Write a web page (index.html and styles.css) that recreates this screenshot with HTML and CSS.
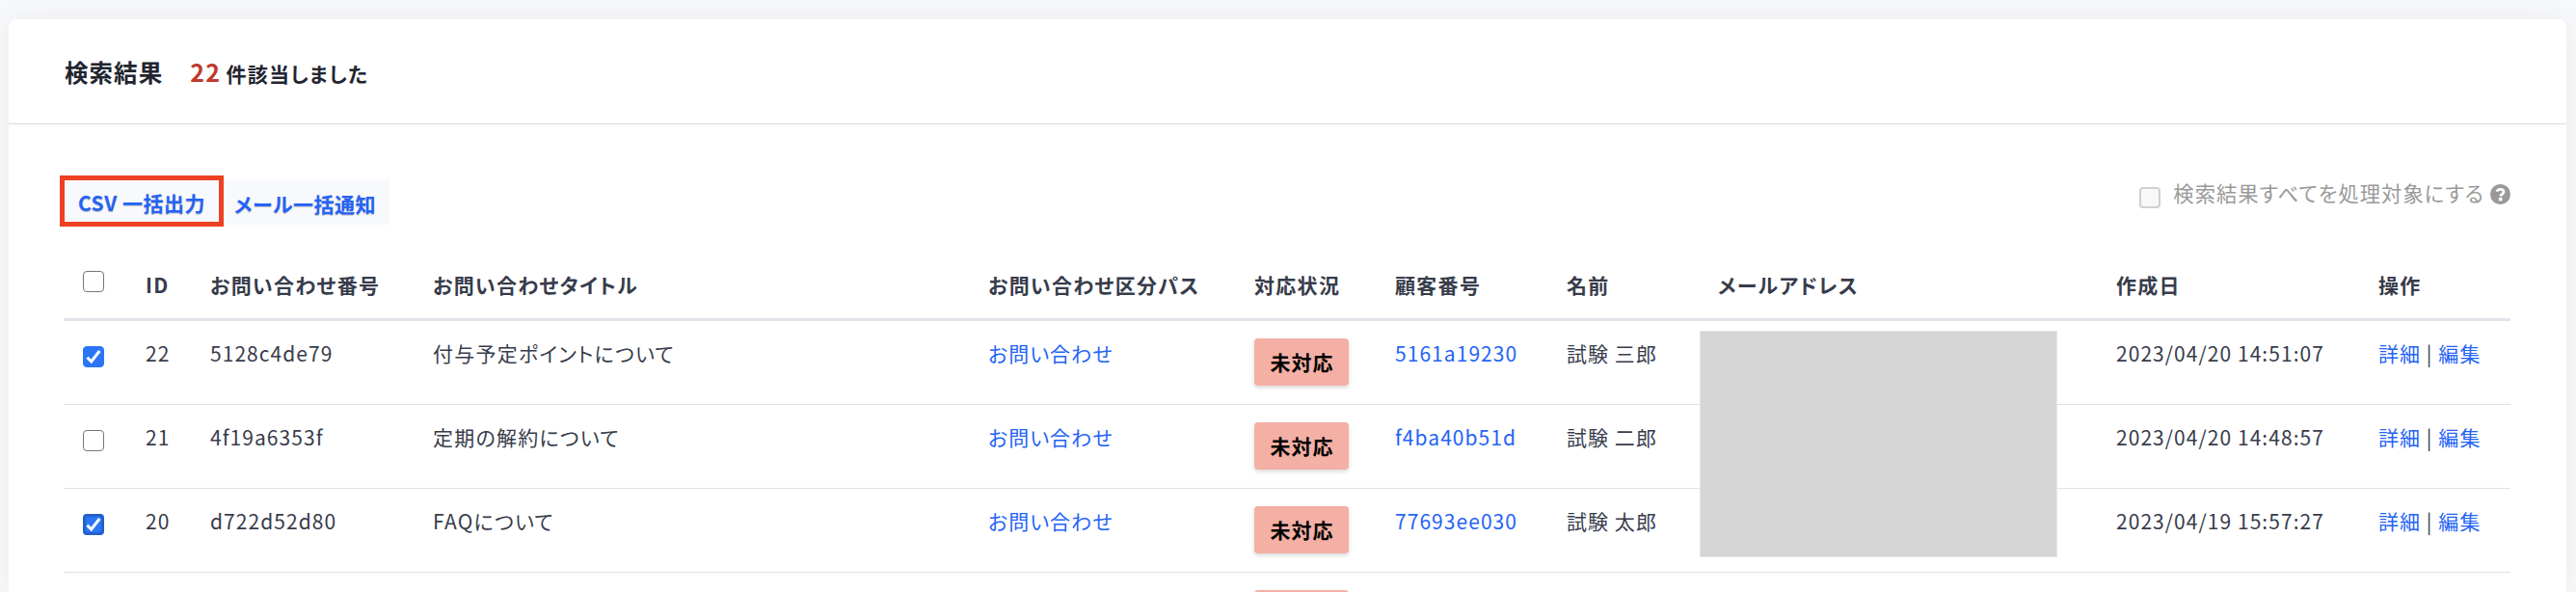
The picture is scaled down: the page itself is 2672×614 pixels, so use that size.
FILE: index.html
```html
<!DOCTYPE html>
<html lang="ja">
<head>
  <meta charset="UTF-8">
  <title>お問い合わせ管理</title>
  <link rel="stylesheet" href="styles.css">
</head>
<body>
  <div class="card">
    <div class="card-header">
      <h2>検索結果</h2>
      <p class="result-count"><span class="count">22</span> 件該当しました</p>
    </div>
    <div class="card-body">
      <div class="toolbar">
        <div class="btn-group">
          <button class="btn btn-csv">CSV 一括出力</button>
          <button class="btn btn-mail">メール一括通知</button>
        </div>
        <label class="select-all">
          <input type="checkbox" class="check" disabled>
          <span>検索結果すべてを処理対象にする</span>
          <svg class="help" viewBox="0 0 21 21">
            <circle cx="10.5" cy="10.5" r="10.5" fill="#999"/>
            <path d="M6.9 7.6C7.6 6 8.8 5.3 10.5 5.3c2.1 0 3.5 1 3.5 2.6 0 2.4-2.9 2.3-3.3 4.6" fill="none" stroke="#fff" stroke-width="2.8"/>
            <rect x="8.9" y="14" width="3.6" height="3.4" fill="#fff"/>
          </svg>
        </label>
      </div>
      <div class="table-wrap">
        <table>
          <colgroup>
            <col class="col-check">
            <col class="col-id">
            <col class="col-code">
            <col class="col-title">
            <col class="col-path">
            <col class="col-status">
            <col class="col-customer">
            <col class="col-name">
            <col class="col-mail">
            <col class="col-date">
            <col class="col-action">
          </colgroup>
          <thead>
            <tr>
              <th><input type="checkbox" class="check"></th>
              <th>ID</th>
              <th>お問い合わせ番号</th>
              <th>お問い合わせタイトル</th>
              <th>お問い合わせ区分パス</th>
              <th>対応状況</th>
              <th>顧客番号</th>
              <th>名前</th>
              <th>メールアドレス</th>
              <th>作成日</th>
              <th>操作</th>
            </tr>
          </thead>
          <tbody>
            <tr>
              <td><input type="checkbox" class="check" checked></td>
              <td>22</td>
              <td>5128c4de79</td>
              <td class="title">付与予定ポイントについて</td>
              <td><a href="#">お問い合わせ</a></td>
              <td><span class="badge">未対応</span></td>
              <td><a href="#">5161a19230</a></td>
              <td>試験 三郎</td>
              <td></td>
              <td>2023/04/20 14:51:07</td>
              <td><a href="#">詳細</a> | <a href="#">編集</a></td>
            </tr>
            <tr>
              <td><input type="checkbox" class="check"></td>
              <td>21</td>
              <td>4f19a6353f</td>
              <td class="title">定期の解約について</td>
              <td><a href="#">お問い合わせ</a></td>
              <td><span class="badge">未対応</span></td>
              <td><a href="#">f4ba40b51d</a></td>
              <td>試験 二郎</td>
              <td></td>
              <td>2023/04/20 14:48:57</td>
              <td><a href="#">詳細</a> | <a href="#">編集</a></td>
            </tr>
            <tr>
              <td><input type="checkbox" class="check focused" checked></td>
              <td>20</td>
              <td>d722d52d80</td>
              <td class="title">FAQについて</td>
              <td><a href="#">お問い合わせ</a></td>
              <td><span class="badge">未対応</span></td>
              <td><a href="#">77693ee030</a></td>
              <td>試験 太郎</td>
              <td></td>
              <td>2023/04/19 15:57:27</td>
              <td><a href="#">詳細</a> | <a href="#">編集</a></td>
            </tr>
            <tr class="row-cut">
              <td></td>
              <td></td>
              <td></td>
              <td></td>
              <td></td>
              <td><span class="badge"></span></td>
              <td></td>
              <td></td>
              <td></td>
              <td></td>
              <td></td>
            </tr>
          </tbody>
        </table>
        <div class="mask"></div>
      </div>
    </div>
  </div>
</body>
</html>
```

FILE: styles.css
```css
* {
  box-sizing: border-box;
}
body {
  margin: 0;
  height: 614px;
  padding: 20px 10px 0 9px;
  background: #f8f9fb;
  color: #373c4b;
  font-family: "Noto Sans CJK JP", sans-serif;
  font-size: 21px;
  line-height: 30px;
  letter-spacing: 0.05em;
  font-feature-settings: "palt";
}
a {
  color: #2463f6;
  text-decoration: none;
}
.card {
  height: 594px;
  background: #fff;
  border-radius: 8px 8px 0 0;
  box-shadow: 0 0 32px rgba(40, 70, 80, 0.08);
  overflow: hidden;
}
.card-header {
  display: flex;
  align-items: baseline;
  height: 109px;
  padding: 35px 57px 0 58px;
  border-bottom: 1px solid #d9dadd;
  color: #22252f;
}
.card-header h2 {
  margin: 0 28px 0 0;
  font-size: 24.5px;
  line-height: 40px;
}
.result-count {
  margin: 0;
  font-weight: bold;
  letter-spacing: 1.3px;
}
.count {
  margin-right: -1px;
  color: #c0392b;
  font-size: 25px;
}
.card-body {
  height: 485px;
  padding: 53px 58px 0 57px;
  overflow: hidden;
}
.toolbar {
  display: flex;
  justify-content: space-between;
  height: 68px;
}
.btn-group {
  display: flex;
  align-items: flex-start;
  margin-left: -4px;
}
.btn {
  height: 47px;
  margin: 4px 0 0;
  padding: 2px 0 0 12px;
  border: 0;
  background: #f8f9fc;
  color: #2463f6;
  font: inherit;
  font-weight: bold;
  letter-spacing: 0.5px;
  font-feature-settings: inherit;
  text-align: left;
  text-shadow: 0 1px 1px rgba(0, 0, 0, 0.25);
  white-space: nowrap;
}
.btn-csv {
  width: 170px;
  height: 53px;
  margin: 0;
  padding: 2px 0 0 14px;
  border: 5px solid #ee4023;
}
.btn-mail {
  width: 172px;
  padding-left: 11px;
}
.select-all {
  display: flex;
  color: #999;
  font-size: 21.3px;
  padding-top: 3px;
}
.select-all .check {
  margin: 9px 13px 0 0;
}
.help {
  width: 21px;
  height: 21px;
  margin: 6px 0 0 6px;
}
.check {
  appearance: none;
  display: block;
  width: 22px;
  height: 22px;
  margin: 0;
  border: 1.5px solid #767676;
  border-radius: 4px;
  background: #fff;
}
.check:checked {
  border-color: #2b76f6;
  background: #2b76f6 url("data:image/svg+xml,%3Csvg xmlns='http://www.w3.org/2000/svg' viewBox='0 0 22 22'%3E%3Cpath d='M4.5 11.8l4.2 4.2L17.3 5' fill='none' stroke='%23fff' stroke-width='3'/%3E%3C/svg%3E") center / 22px 22px;
}
.check.focused {
  border: 3px solid #2460c8;
}
.check:disabled {
  border: 2px solid #d0d0d0;
  background: #f8f8f8;
}
.table-wrap {
  position: relative;
  height: 364px;
  overflow: hidden;
}
table {
  width: 2538px;
  table-layout: fixed;
  border-collapse: separate;
  border-spacing: 0;
}
th {
  height: 83px;
  padding: 30px 0 0 20px;
  border-bottom: 3px solid #e2e3ea;
  letter-spacing: 1.3px;
  text-align: left;
  vertical-align: top;
}
td {
  height: 87px;
  padding: 18px 0 0 20px;
  border-bottom: 1px solid #e0e1e6;
  vertical-align: top;
}
.title {
  letter-spacing: 1.25px;
}
th .check {
  margin-top: 1px;
}
td .check {
  margin-top: 8px;
}
.col-check { width: 65px; }
.col-id { width: 67px; }
.col-code { width: 231px; }
.col-title { width: 576px; }
.col-path { width: 276px; }
.col-status { width: 146px; }
.col-customer { width: 178px; }
.col-name { width: 157px; }
.col-mail { width: 413px; }
.col-date { width: 272px; }
.badge {
  display: block;
  width: 98px;
  height: 49px;
  padding: 9px 0 0 1px;
  border-radius: 4px;
  background: #f4b0a5;
  box-shadow: 0 2px 4px rgba(0, 0, 0, 0.16);
  color: #000;
  font-weight: bold;
  text-align: center;
}
/* covers the mail addresses */
.mask {
  position: absolute;
  top: 93px;
  left: 1697px;
  width: 371px;
  height: 235px;
  border: 1px solid #e6e6e6;
  background: #d6d6d6;
}
```
